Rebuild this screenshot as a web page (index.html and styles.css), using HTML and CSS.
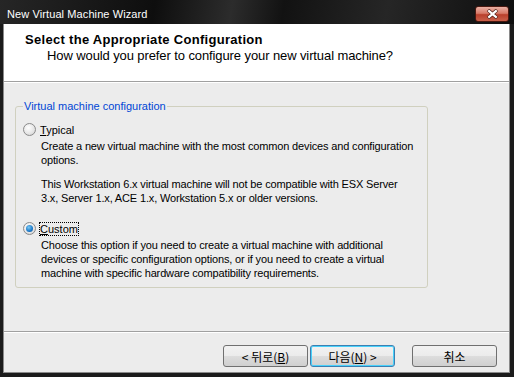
FILE: index.html
```html
<!DOCTYPE html>
<html lang="en">
<head>
    <meta charset="UTF-8">
    <title>New Virtual Machine Wizard</title>
    <link rel="stylesheet" href="styles.css">
</head>
<body>
    <div class="window">
        <div class="titlebar">
            <span class="title">New Virtual Machine Wizard</span>
            <button class="close" type="button">
                <svg width="13" height="10" viewBox="0 0 13 10">
                    <path d="M2 1 L11 9 M11 1 L2 9" stroke="#4a1a12" stroke-width="3.6" />
                    <path d="M2.3 1.3 L10.7 8.7 M10.7 1.3 L2.3 8.7" stroke="#fff" stroke-width="2.2" />
                </svg>
            </button>
        </div>
        <div class="client">
            <div class="header">
                <h1>Select the Appropriate Configuration</h1>
                <p>How would you prefer to configure your new virtual machine?</p>
            </div>
            <div class="body">
                <fieldset class="group">
                    <legend>Virtual machine configuration</legend>
                    <div class="option">
                        <label class="radio"><span class="dot"></span><span><u>T</u>ypical</span></label>
                        <p>Create a new virtual machine with the most common devices and configuration options.</p>
                        <p>This Workstation 6.x virtual machine will not be compatible with ESX Server 3.x, Server 1.x, ACE 1.x, Workstation 5.x or older versions.</p>
                    </div>
                    <div class="option">
                        <label class="radio checked"><span class="dot"></span><span class="focus"><u>C</u>ustom</span></label>
                        <p>Choose this option if you need to create a virtual machine with additional devices or specific configuration options, or if you need to create a virtual machine with specific hardware compatibility requirements.</p>
                    </div>
                </fieldset>
            </div>
            <div class="footer">
                <button type="button">&lt; 뒤로(<u>B</u>)</button>
                <button type="button" class="default">다음(<u>N</u>) &gt;</button>
                <button type="button" class="cancel">취소</button>
            </div>
        </div>
    </div>
</body>
</html>
```

FILE: styles.css
```css
body {
    margin: 0;
    background: #fff;
    font-family: "Liberation Sans", Arial, "Noto Sans CJK KR", sans-serif;
    font-size: 11px;
}
.window {
    width: 514px;
    height: 377px;
    display: flex;
    flex-direction: column;
    background: #1b1b1b;
}
.titlebar {
    height: 24px;
    flex: none;
    display: flex;
    align-items: center;
    justify-content: space-between;
    padding: 0 5px 0 7px;
    background: linear-gradient(100deg, #262626 0%, #0e0e0e 30%, #2c2c2c 45%, #121212 55%, #262626 75%, #0e0e0e 100%);
    color: #fff;
}
.title {
    font-size: 11px;
    letter-spacing: 0.1px;
    margin-top: 3px;
}
.close {
    width: 34px;
    height: 16px;
    margin-top: 3px;
    padding: 0;
    border: 1px solid #4a1810;
    border-radius: 3px;
    background: linear-gradient(#eab0a4 0%, #d77a68 45%, #b9402c 55%, #c9604a 100%);
    display: flex;
    align-items: center;
    justify-content: center;
}
.client {
    flex: 1;
    margin: 0 4px 4px 3px;
    border: 1px solid #8a8a8a;
    border-top: none;
    background: #ececec;
    display: flex;
    flex-direction: column;
}
.header {
    height: 58px;
    flex: none;
    background: #fff;
    border-bottom: 1px solid #a0a0a0;
    box-shadow: 0 1px 0 #fff;
    padding: 8px 0 0 21px;
    box-sizing: border-box;
}
.header h1 {
    margin: 0;
    font-size: 13px;
    font-weight: bold;
    letter-spacing: 0.3px;
    line-height: 15px;
    color: #000;
}
.header p {
    margin: 1px 0 0 22px;
    font-size: 13px;
    letter-spacing: -0.1px;
    line-height: 15px;
    color: #000;
}
.body {
    flex: 1;
    padding: 18px 0 0 11px;
}
.group {
    width: 413px;
    min-width: 0;
    height: 188px;
    box-sizing: border-box;
    margin: 0;
    padding: 11px 0 0 7px;
    border: 1px solid #d0d0bf;
    border-radius: 3px;
}
.group legend {
    color: #0046d5;
    padding: 0 1px;
    margin-left: 0;
}
.option p {
    margin: 0 0 10px 18px;
    line-height: 14px;
    color: #000;
    width: 375px;
    letter-spacing: -0.15px;
}
.radio {
    display: flex;
    align-items: center;
    gap: 4px;
    height: 13px;
    margin-bottom: 3px;
}
.dot {
    width: 11px;
    height: 11px;
    border-radius: 50%;
    border: 1px solid #8a8a8a;
    background: radial-gradient(circle at 40% 35%, #fff 0%, #e4e4e4 60%, #c8c8c8 100%);
    display: flex;
    align-items: center;
    justify-content: center;
}
.checked .dot::after {
    content: "";
    width: 7px;
    height: 7px;
    border-radius: 50%;
    background: radial-gradient(circle at 40% 35%, #7ccaf4 0%, #1a78c8 60%, #0a4e94 100%);
}
.focus {
    outline: 1px dotted #000;
}
.option + .option {
    margin-top: 17px;
}
.footer {
    height: 41px;
    flex: none;
    box-sizing: border-box;
    border-top: 1px solid #a0a0a0;
    box-shadow: inset 0 1px 0 #fff;
    display: flex;
    align-items: flex-start;
    justify-content: flex-end;
    padding: 13px 12px 0 0;
    gap: 2px;
}
.footer button {
    width: 85px;
    height: 22px;
    border: 1px solid #707070;
    border-radius: 3px;
    background: linear-gradient(#f2f2f2 0%, #ebebeb 50%, #dddddd 51%, #cfcfcf 100%);
    font-family: "Noto Sans CJK KR", sans-serif;
    font-size: 12px;
    color: #000;
    padding: 0;
}
.footer .default {
    border-color: #3c7fb1;
    box-shadow: inset 0 0 0 1px #48d1fb;
}
.footer .cancel {
    margin-left: 15px;
}
```
